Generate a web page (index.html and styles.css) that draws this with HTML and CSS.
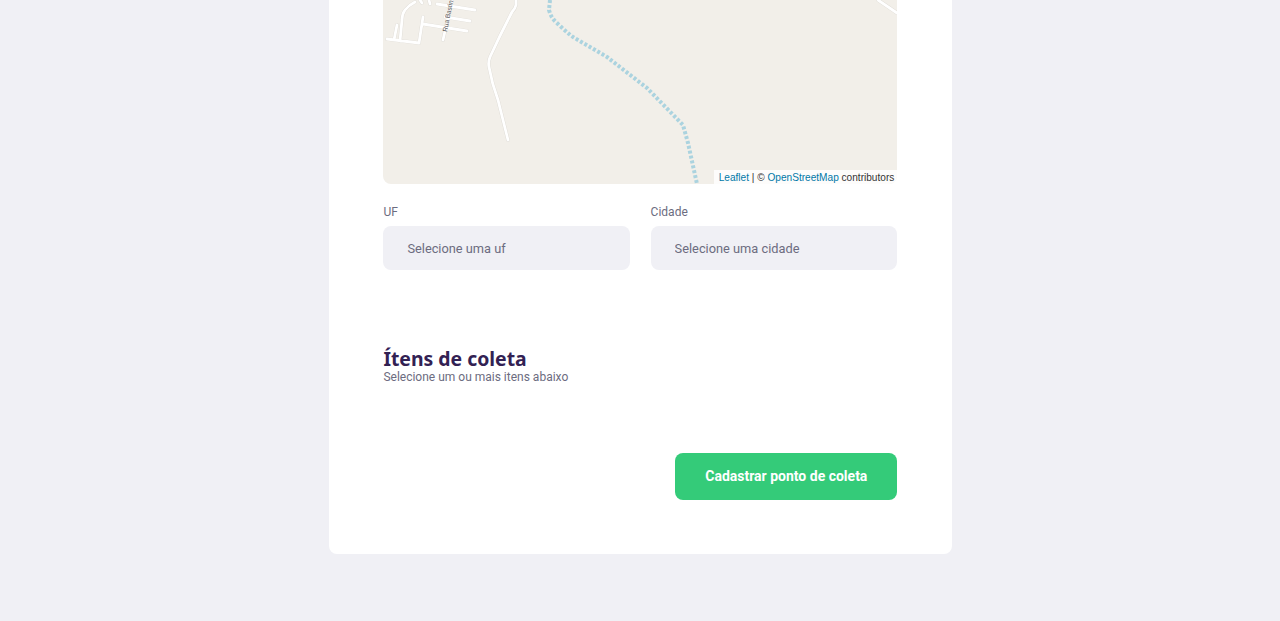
FILE: index.html
```html
<!DOCTYPE html>
<html lang="pt-BR">
<head>
    <meta charset="utf-8">
    <title>Ecoleta</title>
    <link rel="stylesheet" href="styles.css">
</head>
<body>
    <form class="card">
        <div class="map">
            <svg class="map-tiles" width="514" height="184" viewBox="0 0 514 184">
                <!-- road casing first, then the white fill on top -->
                <g class="road-casing">
                    <path d="M133 0V5Q132 9 129 12Q117 35 107 57Q105 62 106 67Q109 84 115 100L125 140"/>
                    <path d="M4 39L36 43M32 2Q26 5 22 10Q19 14 19 20L17 41M14 25L11 40M40 17L36 43M40 24L84 31M60 40L69 0M62 17L87 21M54 4L92 10M37 0L39 3M46 0L47 4"/>
                    <path d="M495 0L514 13"/>
                </g>
                <g class="road">
                    <path d="M133 0V5Q132 9 129 12Q117 35 107 57Q105 62 106 67Q109 84 115 100L125 140"/>
                    <path d="M4 39L36 43M32 2Q26 5 22 10Q19 14 19 20L17 41M14 25L11 40M40 17L36 43M40 24L84 31M60 40L69 0M62 17L87 21M54 4L92 10M37 0L39 3M46 0L47 4"/>
                    <path d="M495 0L514 13"/>
                </g>
                <path class="river" d="M167 0L166 10Q168 18 174 23Q182 31 190 37L224 57L264 88L300 125L305 143L314 184"/>
                <text class="street-name" transform="translate(64 32) rotate(-79)">Rua Bastin</text>
            </svg>
            <div class="attribution"><a href="#">Leaflet</a> | © <a href="#">OpenStreetMap</a> contributors</div>
        </div>

        <div class="field-group">
            <div class="field">
                <label for="uf">UF</label>
                <select id="uf">
                    <option>Selecione uma uf</option>
                </select>
            </div>
            <div class="field">
                <label for="city">Cidade</label>
                <select id="city">
                    <option>Selecione uma cidade</option>
                </select>
            </div>
        </div>

        <div class="items-header">
            <h2>Ítens de coleta</h2>
            <span>Selecione um ou mais itens abaixo</span>
        </div>

        <button class="submit" type="button">Cadastrar ponto de coleta</button>
    </form>
</body>
</html>
```

FILE: styles.css
```css
* {
    box-sizing: border-box;
}

body {
    margin: 0;
    height: 621px;
    overflow: hidden;
    background: #f0f0f5;
    font-family: Roboto, Arial, sans-serif;
    color: #6c6c80;
}

.card {
    display: flex;
    flex-direction: column;
    width: 623px;
    height: 554px;
    margin-left: 329px;
    padding: 0 54.7px 0 54.4px;
    background: #fff;
    border-radius: 0 0 8px 8px;
}

.map {
    position: relative;
    height: 184px;
    background: #f2efe9;
    border-radius: 0 0 8px 8px;
    overflow: hidden;
}

.map-tiles {
    display: block;
}

.road-casing,
.road,
.river {
    fill: none;
}

.road-casing {
    stroke: #dedbd5;
    stroke-width: 3.6;
    stroke-linecap: round;
}

.road {
    stroke: #fff;
    stroke-width: 2.8;
    stroke-linecap: round;
}

.river {
    stroke: #abd3df;
    stroke-width: 4;
    stroke-dasharray: 3 2;
}

.street-name {
    font-family: "Liberation Sans", Arial, sans-serif;
    font-size: 6.5px;
    fill: #555;
}

.attribution {
    position: absolute;
    right: 0;
    bottom: 0;
    padding: 2px 3px 0 5px;
    background: rgba(255, 255, 255, 0.8);
    font-family: "Liberation Sans", Arial, sans-serif;
    font-size: 10.1px;
    line-height: 12px;
    color: #333;
}

.attribution a {
    color: #0078a8;
    text-decoration: none;
}

.field-group {
    display: flex;
    gap: 20.5px;
    margin-top: 21px;
}

.field {
    flex: 1;
}

.field label {
    display: block;
    margin-bottom: 7px;
    font-size: 12px;
    line-height: 14px;
}

.field select {
    display: block;
    width: 100%;
    height: 44px;
    padding: 0 24px;
    border: none;
    border-radius: 8px;
    background: #f0f0f5;
    color: #6c6c80;
    font-family: Roboto, Arial, sans-serif;
    font-size: 12.8px;
    appearance: none;
}

.items-header {
    margin-top: 78px;
}

.items-header h2 {
    margin: 0;
    color: #322153;
    font-family: "Noto Sans", sans-serif;
    font-size: 19.4px;
    line-height: 22px;
    font-weight: 700;
}

.items-header span {
    display: block;
    font-size: 12px;
    line-height: 14px;
}

.submit {
    align-self: flex-end;
    width: 222px;
    height: 47.5px;
    margin-top: 68.5px;
    border: none;
    border-radius: 8px;
    background: #34cb79;
    color: #fff;
    font-family: Roboto, Arial, sans-serif;
    font-size: 14px;
    font-weight: 700;
    cursor: pointer;
}
```
